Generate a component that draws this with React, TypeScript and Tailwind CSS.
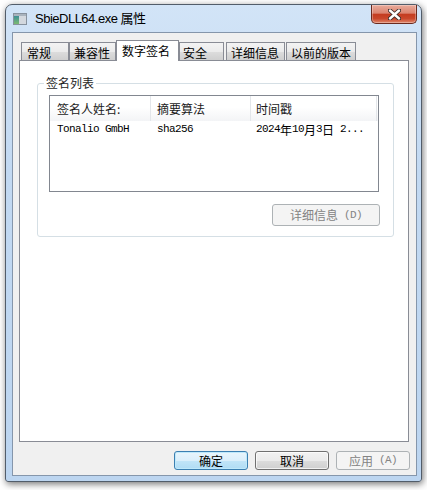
import React from "react";

function Mixed({ text, mono = "text-[11px]" }: { text: string; mono?: string }) {
  const parts = text.match(/[\x00-\x7f]+|[^\x00-\x7f]+/g) || [];
  return (
    <>
      {parts.map((p, i) =>
        /^[\x00-\x7f]/.test(p) ? (
          <span key={i} className={`font-['Liberation_Mono',monospace] ${mono} tracking-[-0.6px] whitespace-pre`}>
            {p}
          </span>
        ) : (
          <span key={i} className="text-[12px]">
            {p}
          </span>
        )
      )}
    </>
  );
}

function AppIcon() {
  return (
    <svg width="14" height="12" viewBox="0 0 14 12">
      <defs>
        <linearGradient id="ig" x1="0" y1="0" x2="0" y2="1">
          <stop offset="0" stopColor="#3d8f96" />
          <stop offset="1" stopColor="#7dbb72" />
        </linearGradient>
      </defs>
      <rect x="0.5" y="0.5" width="13" height="11" fill="#e4e8ec" stroke="#87929e" />
      <rect x="1" y="1" width="12" height="2" fill="#a9b3bd" />
      <rect x="1" y="3" width="5" height="8" fill="url(#ig)" />
      <rect x="6" y="3" width="7" height="8" fill="#d3d8de" />
    </svg>
  );
}

const tabs = [
  { label: "常规", cls: "w-[48px] pl-[5px]" },
  { label: "兼容性", cls: "w-[47px] pl-[4px]" },
  { label: "数字签名", cls: "w-[63px] pl-[5px]", sel: true },
  { label: "安全", cls: "w-[45px] pl-[3px]" },
  { label: "详细信息", cls: "ml-[2px] w-[59px] pl-[4px]" },
  { label: "以前的版本", cls: "ml-[1px] w-[70px] pl-[4px]" },
];

export default function App() {
  return (
    <div className="w-[427px] h-[490px] bg-white pl-[5px] pt-[4px] font-['Noto_Sans_CJK_SC',sans-serif] text-[12px] text-black">
      <div className="w-[417px] h-[478px] flex flex-col rounded-t-[7px] rounded-b-[3px] border border-[#525d6a] bg-[linear-gradient(to_bottom,#d2e4f7,#c2d9f2_35%,#bcd5f0)] shadow-[1px_2px_7px_rgba(0,0,0,0.55)]">
        {/* title bar */}
        <div className="h-[27px] flex shrink-0">
          <div className="flex items-center pl-[7px] gap-[8px]">
            <AppIcon />
            <span className="font-['Liberation_Sans','Noto_Sans_CJK_SC',sans-serif] text-[13px] tracking-[-0.5px] text-black leading-none">
              SbieDLL64.exe 属性
            </span>
          </div>
          <div className="ml-auto mr-[4px] w-[46px] h-[19px] rounded-b-[5px] border border-t-0 border-[#6b2a1e] bg-[linear-gradient(to_bottom,#e9ab9b_0%,#db8470_45%,#c43c20_52%,#c9472b_75%,#e0876b_100%)] shadow-[inset_0_0_0_1px_rgba(255,255,255,0.3)] flex items-center justify-center">
            <svg width="13" height="11" viewBox="0 0 13 11">
              <path d="M2 1.5 L11 9.5 M11 1.5 L2 9.5" stroke="#3a2a28" strokeWidth="4.2" strokeLinecap="round" />
              <path d="M2 1.5 L11 9.5 M11 1.5 L2 9.5" stroke="#ffffff" strokeWidth="2.4" strokeLinecap="round" />
            </svg>
          </div>
        </div>

        {/* client */}
        <div className="flex-1 ml-[6px] mr-[4px] mb-[5px] border border-[#8596ab] bg-[#f0f0f0] flex flex-col">
          <div className="ml-[6px] mr-[7px] mt-[7px] flex flex-col">
            {/* tab strip */}
            <div className="h-[20px] flex items-end pl-[2px]">
              {tabs.map((t) =>
                t.sel ? (
                  <div
                    key={t.label}
                    className={`${t.cls} relative z-10 h-[21px] -mb-px border border-b-0 border-[#898c95] bg-white flex items-center leading-none text-[12px] text-black`}
                  >
                    {t.label}
                  </div>
                ) : (
                  <div
                    key={t.label}
                    className={`${t.cls} h-[18px] border border-b-0 border-[#898c95] bg-[linear-gradient(to_bottom,#f3f3f3_0%,#ebebeb_50%,#dddddd_50%,#cfcfcf_100%)] flex items-center pt-[2px] leading-none text-[12px] text-black`}
                  >
                    {t.label}
                  </div>
                )
              )}
            </div>

            {/* tab panel */}
            <div className="h-[382px] border border-[#898c95] bg-white flex flex-col">
              {/* group box */}
              <div className="relative ml-[17px] mt-[22px] mr-[14px] h-[154px] rounded-[3px] border border-[#d5dfe5] pl-[11px] pt-[11px] pr-[14px] flex flex-col">
                <span className="absolute left-[6px] top-[-9px] h-[16px] px-[2px] bg-white leading-[16px] text-[12px] text-[#1e1e1e]">
                  签名列表
                </span>

                {/* list view */}
                <div className="h-[97px] border border-[#828790] bg-white flex flex-col">
                  <div className="h-[25px] flex bg-[linear-gradient(to_bottom,#ffffff_0%,#ffffff_45%,#f3f4f6_100%)] text-[#1a1a1a]">
                    <div className="w-[101px] border-r border-[#e3e6ea] pl-[7px] flex items-center text-[12px]">
                      签名人姓名:
                    </div>
                    <div className="w-[100px] border-r border-[#e3e6ea] pl-[6px] flex items-center text-[12px]">
                      摘要算法
                    </div>
                    <div className="w-[126px] border-r border-[#e3e6ea] pl-[5px] flex items-center text-[12px]">
                      时间戳
                    </div>
                  </div>
                  <div className="h-[17px] flex items-center text-black">
                    <div className="w-[101px] pl-[7px] flex items-center">
                      <Mixed text="Tonalio GmbH" />
                    </div>
                    <div className="w-[100px] pl-[6px] flex items-center">
                      <Mixed text="sha256" />
                    </div>
                    <div className="w-[126px] pl-[5px] flex items-center whitespace-nowrap">
                      <Mixed text="2024年10月3日 2..." />
                    </div>
                  </div>
                </div>

                <div className="mt-[12px] flex justify-end -mr-px">
                  <div className="w-[108px] h-[22px] rounded-[3px] border border-[#adb2b5] bg-[#f4f4f4] flex items-center justify-center text-[#838383] leading-none">
                    <Mixed text="详细信息 (D)" />
                  </div>
                </div>
              </div>
            </div>

            {/* bottom buttons */}
            <div className="mt-[9px] flex justify-end gap-[7px] -mr-[1px]">
              <div className="w-[74px] h-[19px] rounded-[3px] border border-[#3c7fb1] bg-[linear-gradient(to_bottom,#e9f5fc_0%,#dbeffb_50%,#c2e5f8_50%,#b0dcf4_100%)] shadow-[inset_0_0_0_1px_#bfe9fb] flex items-center justify-center leading-none text-[12px] text-black">
                确定
              </div>
              <div className="w-[74px] h-[19px] rounded-[3px] border border-[#707070] bg-[linear-gradient(to_bottom,#f2f2f2_0%,#ebebeb_50%,#dddddd_50%,#cfcfcf_100%)] shadow-[inset_0_0_0_1px_rgba(255,255,255,0.7)] flex items-center justify-center leading-none text-[12px] text-black">
                取消
              </div>
              <div className="w-[74px] h-[19px] rounded-[3px] border border-[#adb2b5] bg-[#f4f4f4] flex items-center justify-center leading-none text-[#838383]">
                <Mixed text="应用 (A)" />
              </div>
            </div>
          </div>
        </div>
      </div>
    </div>
  );
}
